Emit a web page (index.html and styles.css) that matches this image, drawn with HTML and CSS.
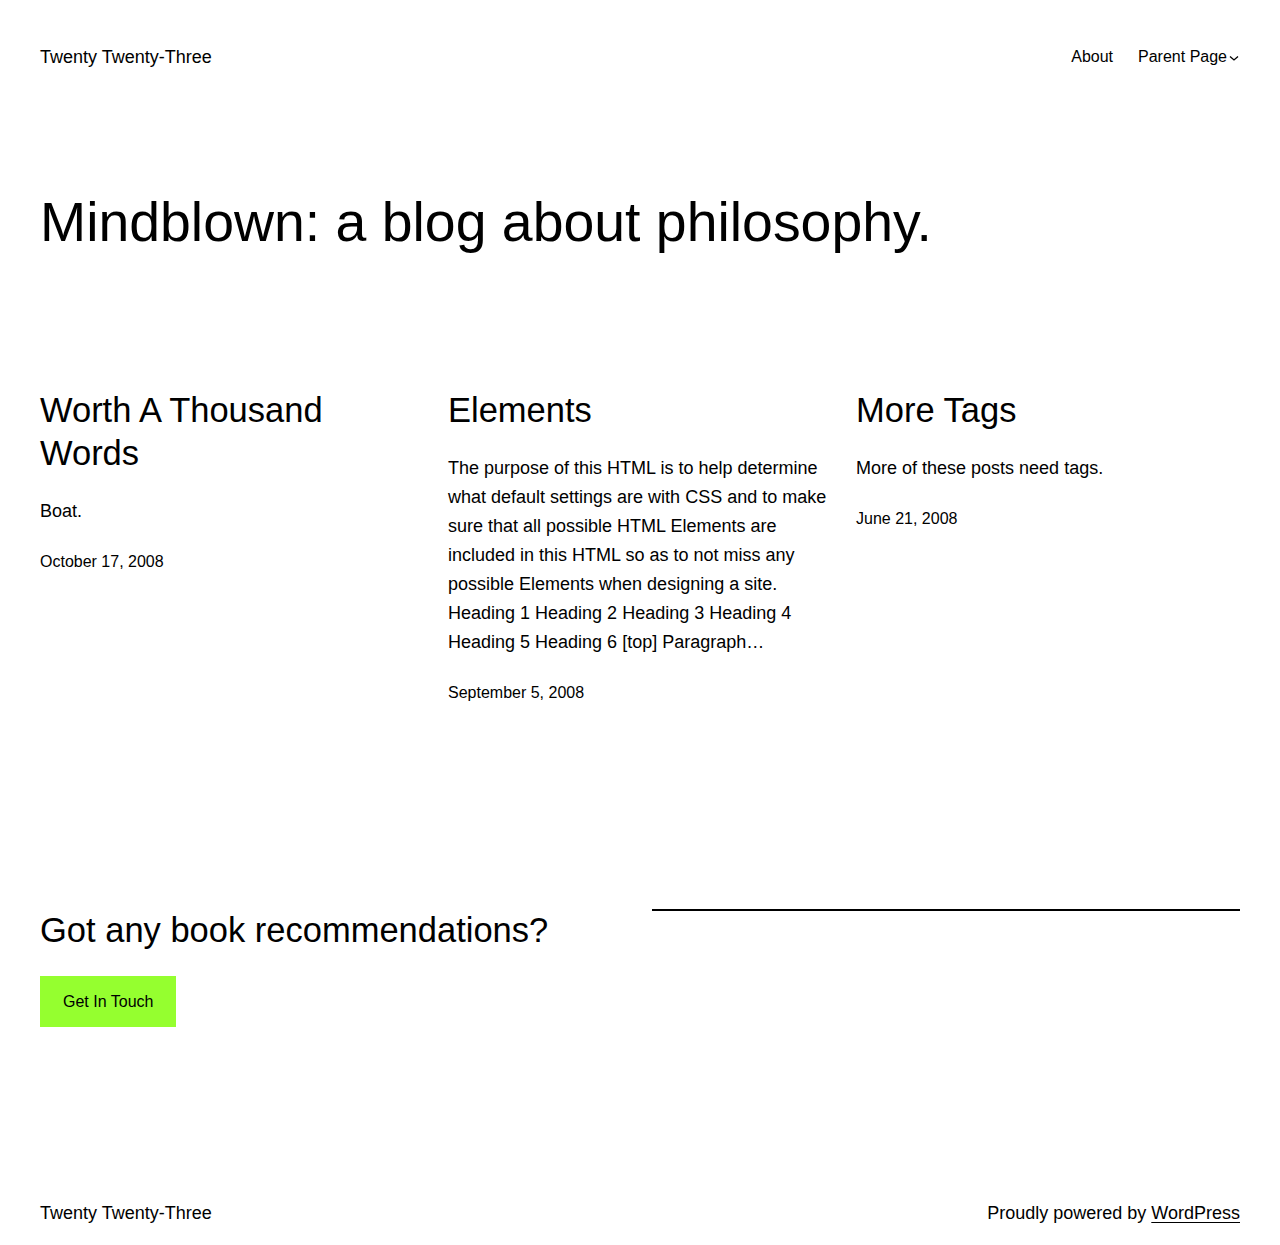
FILE: index.html
```html
<!DOCTYPE html>
<html lang="en">
<head>
<meta charset="utf-8">
<title>Twenty Twenty-Three</title>
<link rel="stylesheet" href="styles.css">
</head>
<body>
<header class="site-header">
  <a class="site-title" href="#">Twenty Twenty-Three</a>
  <nav class="nav">
    <a href="#">About</a>
    <a href="#" class="has-sub">Parent Page<svg class="caret" viewBox="0 0 12 12" aria-hidden="true"><path d="M2 4.5l4 3.5 4-3.5" fill="none" stroke="currentColor" stroke-width="1.3"/></svg></a>
  </nav>
</header>

<main class="main">
  <h1 class="page-title">Mindblown: a blog about philosophy.</h1>

  <div class="posts">
    <article class="post">
      <h2 class="post-title">Worth A Thousand Words</h2>
      <p class="excerpt">Boat.</p>
      <div class="date">October 17, 2008</div>
    </article>
    <article class="post">
      <h2 class="post-title">Elements</h2>
      <p class="excerpt">The purpose of this HTML is to help determine what default settings are with CSS and to make sure that all possible HTML Elements are included in this HTML so as to not miss any possible Elements when designing a site. Heading 1 Heading 2 Heading 3 Heading 4 Heading 5 Heading 6 [top] Paragraph…</p>
      <div class="date">September 5, 2008</div>
    </article>
    <article class="post">
      <h2 class="post-title">More Tags</h2>
      <p class="excerpt">More of these posts need tags.</p>
      <div class="date">June 21, 2008</div>
    </article>
  </div>

  <section class="cta">
    <div class="cta-left">
      <h2 class="cta-title">Got any book recommendations?</h2>
      <a class="button" href="#">Get In Touch</a>
    </div>
    <div class="cta-right">
      <hr class="sep">
    </div>
  </section>
</main>

<footer class="site-footer">
  <span class="footer-title">Twenty Twenty-Three</span>
  <span class="credit">Proudly powered by <a href="#">WordPress</a></span>
</footer>
</body>
</html>
```

FILE: styles.css
```css
* { box-sizing: border-box; }
html, body { margin: 0; padding: 0; }
body {
  font-family: "Liberation Sans", Arial, sans-serif;
  color: #000;
  background: #fff;
  font-size: 18px;
  line-height: 1.6;
}
a { color: inherit; text-decoration: none; }

.site-header {
  display: flex;
  justify-content: space-between;
  align-items: center;
  padding: 43px 40px 0;
  font-size: 18px;
  line-height: 28px;
}
.nav { display: flex; gap: 25px; font-size: 16px; }
.has-sub { display: inline-flex; align-items: center; }
.caret { width: 12px; height: 12px; margin-left: 1px; margin-top: 2px; }

.main { padding: 0 40px; }
.page-title {
  margin: 118px 0 0;
  font-size: 55.4px;
  font-weight: 400;
  line-height: 66px;
}

.posts {
  display: grid;
  grid-template-columns: repeat(3, 1fr);
  gap: 24px;
  margin-top: 134px;
}
.post-title {
  margin: 0;
  font-size: 34.5px;
  font-weight: 400;
  line-height: 43px;
}
.excerpt {
  margin: 22px 0 0;
  font-size: 18px;
  line-height: 29px;
}
.date {
  margin-top: 23px;
  font-size: 16px;
  line-height: 26px;
}

.cta {
  display: grid;
  grid-template-columns: 1fr 1fr;
  gap: 24px;
  margin-top: 203px;
  align-items: start;
}
.cta-left {
  display: flex;
  flex-direction: column;
  align-items: flex-start;
}
.cta-title {
  margin: 0;
  font-size: 34.5px;
  font-weight: 400;
  line-height: 43px;
}
.button {
  display: block;
  margin-top: 24px;
  background: #95ff2f;
  color: #000;
  font-size: 16px;
  line-height: 25.6px;
  padding: 12.7px 23px;
}
.sep {
  margin: 0;
  border: 0;
  border-top: 2px solid #000;
}

.site-footer {
  display: flex;
  justify-content: space-between;
  align-items: center;
  padding: 172px 40px 17px;
  font-size: 18px;
  line-height: 29px;
}
.credit a { text-decoration: underline; text-underline-offset: 3px; }
```
